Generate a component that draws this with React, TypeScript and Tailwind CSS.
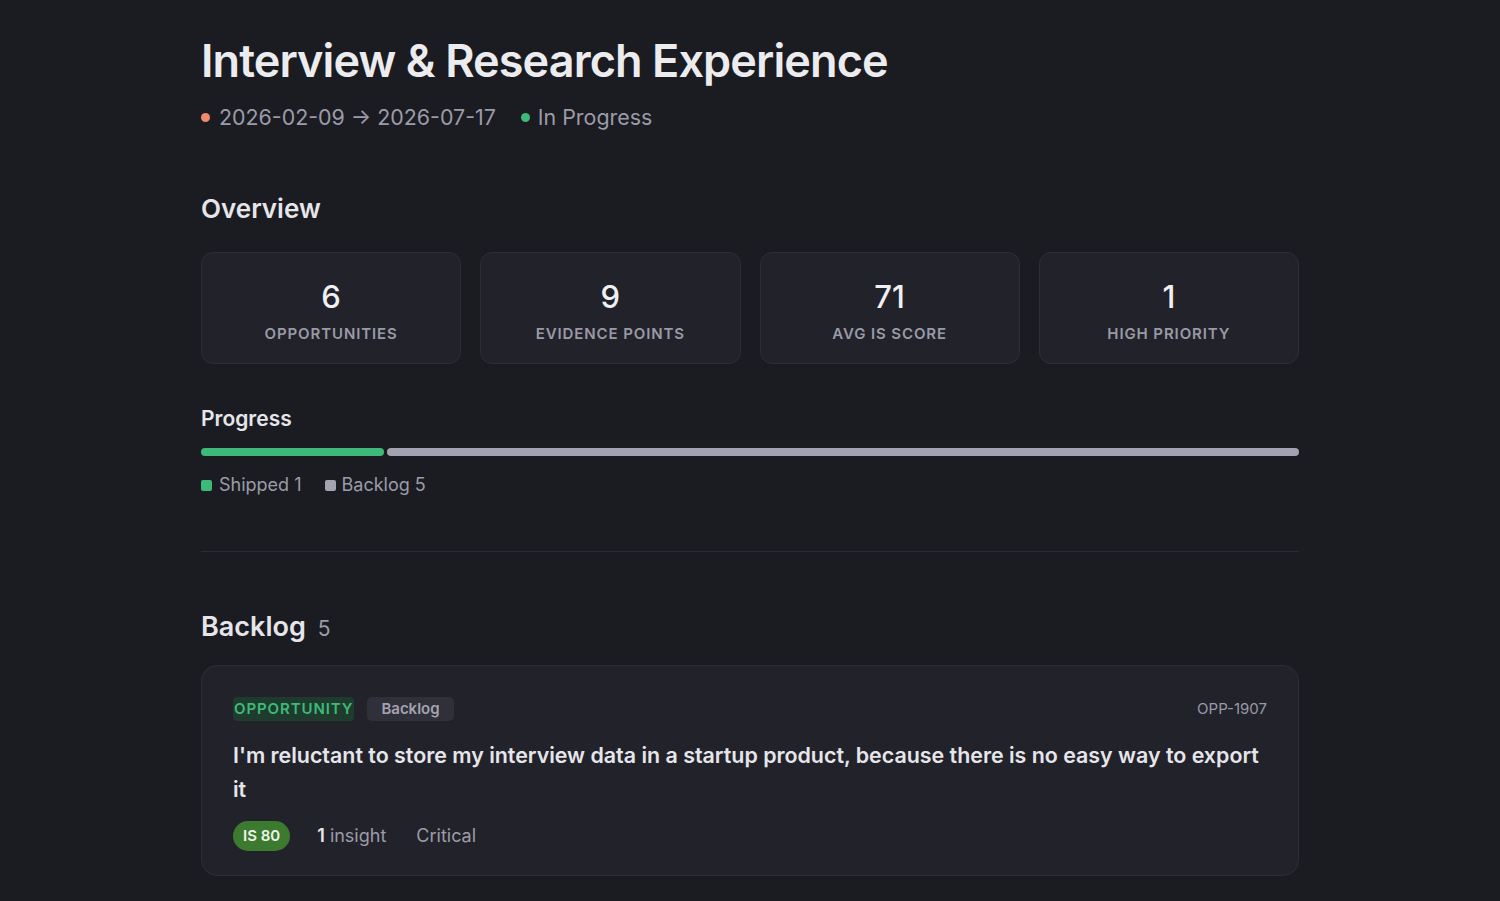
import React from "react";

const stats = [
  { value: "6", label: "Opportunities" },
  { value: "9", label: "Evidence Points" },
  { value: "71", label: "AVG IS Score" },
  { value: "1", label: "High Priority" },
];

export default function App() {
  return (
    <div
      className="min-h-[901px] w-full bg-[#1b1b22] text-[#e6e6ea]"
      style={{ fontFamily: "Inter, 'Noto Sans', sans-serif" }}
    >
      <div className="mx-auto w-[1098px] pt-[34px]">
        {/* Header */}
        <h1 className="text-[45px] font-semibold leading-[54px] tracking-[-0.02em] text-[#ececef]">
          Interview &amp; Research Experience
        </h1>
        <div className="mt-[14px] flex items-center text-[21.4px] leading-[30px] text-[#9c9ca8]">
          <span className="mr-[9px] h-[9px] w-[9px] rounded-full bg-[#f08a6c]" />
          <span>2026-02-09 → 2026-07-17</span>
          <span className="ml-[25px] mr-[8px] h-[9px] w-[9px] rounded-full bg-[#3dba79]" />
          <span>In Progress</span>
        </div>

        {/* Overview */}
        <h2 className="mt-[60px] text-[26px] font-semibold leading-[34px] text-[#e6e6ea]">Overview</h2>
        <div className="mt-[26px] grid grid-cols-4 gap-[19px]">
          {stats.map((s) => (
            <div
              key={s.label}
              className="flex h-[112px] flex-col items-center justify-center rounded-[12px] border border-[#2d2d37] bg-[#22222b] pt-[6px]"
            >
              <div className="text-[31px] font-medium leading-[38px] text-[#f0f0f2]">{s.value}</div>
              <div className="mt-[8px] text-[15px] font-semibold uppercase leading-[20px] tracking-[0.06em] text-[#9a9aa6]">
                {s.label}
              </div>
            </div>
          ))}
        </div>

        {/* Progress */}
        <h3 className="mt-[40px] text-[21px] font-semibold leading-[30px] text-[#e6e6ea]">Progress</h3>
        <div className="mt-[14px] flex h-[8px] gap-[3px]">
          <div className="h-full w-[183px] rounded-full bg-[#3dba79]" />
          <div className="h-full flex-1 rounded-full bg-[#a2a2b0]" />
        </div>
        <div className="mt-[16px] flex items-center text-[18px] leading-[26px] text-[#9c9ca8]">
          <span className="mr-[7px] h-[11px] w-[11px] rounded-[2px] bg-[#3dba79]" />
          <span>Shipped 1</span>
          <span className="ml-[23px] mr-[6px] h-[11px] w-[11px] rounded-[2px] bg-[#a2a2b0]" />
          <span>Backlog 5</span>
        </div>

        <div className="mt-[53px] h-px w-full bg-[#2a2a33]" />

        {/* Backlog */}
        <div className="mt-[56px] flex items-baseline gap-[12px]">
          <h2 className="text-[27px] font-semibold leading-[38px] text-[#e6e6ea]">Backlog</h2>
          <span className="text-[21px] text-[#9c9ca8]">5</span>
        </div>

        <div className="mt-[19px] rounded-[16px] border border-[#2d2d37] bg-[#22222b] px-[31px] pb-[24px] pt-[31px]">
          <div className="flex items-center justify-between">
            <div className="flex items-center gap-[13px]">
              <span className="rounded-[4px] bg-[#1e3b2e] px-[1px] py-[2px] text-[15px] font-semibold uppercase leading-[20px] tracking-[0.06em] text-[#3dba79]">
                Opportunity
              </span>
              <span className="rounded-[5px] bg-[#30303b] px-[14px] py-[2px] text-[15px] font-semibold leading-[20px] text-[#a4a4b0]">
                Backlog
              </span>
            </div>
            <span className="text-[15px] leading-[20px] text-[#9a9aa6]">OPP-1907</span>
          </div>
          <p className="mt-[17px] text-[21.4px] font-semibold leading-[34px] text-[#e6e6ea]">
            I'm reluctant to store my interview data in a startup product, because there is no easy way to export it
          </p>
          <div className="mt-[15px] flex items-center text-[18px] leading-[26px] text-[#9c9ca8]">
            <span className="rounded-full bg-[#3b7a2f] px-[10px] py-[3px] text-[15px] font-semibold leading-[24px] text-[#eef4ea]">
              IS 80
            </span>
            <span className="ml-[27px]">
              <span className="font-semibold text-[#e6e6ea]">1</span> insight
            </span>
            <span className="ml-[30px]">Critical</span>
          </div>
        </div>
      </div>
    </div>
  );
}
